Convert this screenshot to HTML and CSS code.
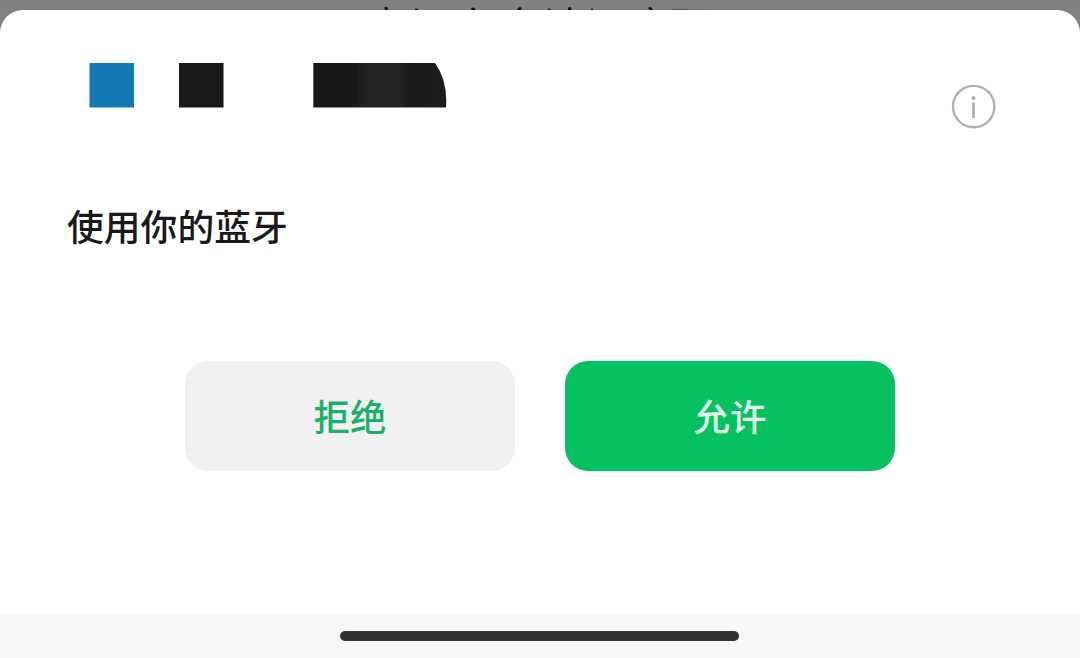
FILE: index.html
```html
<!DOCTYPE html>
<html lang="zh-CN">
<head>
<meta charset="utf-8">
<title>使用你的蓝牙</title>
<link rel="stylesheet" href="styles.css">
</head>
<body>
<div class="screen">
  <svg class="backdrop" viewBox="0 0 1080 10" aria-hidden="true">
    <path class="mark" d="M384 7.500l3-.7 1.500 3.200h-3.500zM471 8.500q3-2.500 4.500 1.500h-4zM517 10q1.500-4 4.500-2.500l-.5 2.500zM568 7.500l3-.5.7 3H568zM648 7.500l3-.5 2 3h-3.500z"/>
    <path class="mark" d="M415 8.700h3v1.300h-3zM548 8.500h2.500V10H548zM591 8.700h2V10h-2z"/>
    <path class="mark faint" d="M672 9h16v1h-16z"/>
    <path class="mark fainter" d="M688 9h23v1h-23z"/>
  </svg>
  <main class="sheet">
    <header class="header">
      <svg class="redaction" viewBox="0 0 358 45" aria-hidden="true">
        <defs>
          <linearGradient id="ink">
            <stop offset="0" stop-color="#181818"/>
            <stop offset=".32" stop-color="#191919"/>
            <stop offset=".38" stop-color="#222"/>
            <stop offset=".65" stop-color="#222"/>
            <stop offset=".73" stop-color="#191919"/>
            <stop offset="1" stop-color="#1c1c1c"/>
          </linearGradient>
        </defs>
        <path fill="#1278b6" d="M.5 0H45v44.500H.5z"/>
        <path fill="#191919" d="M90 0h44.500v44.500H90z"/>
        <path fill="url(#ink)" d="M224.300 0H346Q359 18 357 44.500H224.300z"/>
      </svg>
      <svg class="info" viewBox="0 0 46 46" role="img" aria-label="info">
        <circle cx="22.700" cy="22.600" r="20.700" fill="none" stroke="#b0b0b0" stroke-width="2.400"/>
        <circle cx="22.500" cy="14" r="2" fill="#a9a9a9"/>
        <path d="M22.500 18.500v15.300" stroke="#a9a9a9" stroke-width="2.600"/>
      </svg>
    </header>
    <h1 class="title">使用你的蓝牙</h1>
    <div class="actions">
      <button class="button deny">拒绝</button>
      <button class="button allow">允许</button>
    </div>
  </main>
  <footer class="home-area"><div class="home-indicator"></div></footer>
</div>
</body>
</html>
```
FILE: styles.css
```css
* {
  box-sizing: border-box;
}

body {
  margin: 0;
  background: #fff;
  font-family: "Noto Sans CJK SC", sans-serif;
}

.screen {
  display: flex;
  flex-direction: column;
  width: 1080px;
  height: 658px;
  overflow: hidden;
  background: linear-gradient(#818181 40px, #fff 40px);
}

.backdrop {
  display: block;
  flex: none;
  width: 1080px;
  height: 10px;
}

.mark {
  fill: #111;
}

.faint {
  fill: #555;
}

.fainter {
  fill: #707070;
}

.sheet {
  flex: none;
  height: 604px;
  padding-top: 53px;
  border-radius: 23px 23px 0 0;
  background: #fff;
}

.header {
  display: flex;
  justify-content: space-between;
  height: 67px;
  padding: 0 83px 0 89px;
}

.redaction {
  width: 358px;
  height: 45px;
}

.info {
  width: 46px;
  height: 46px;
  margin-top: 21px;
}

.title {
  height: 54px;
  margin: 68px 0 0 67px;
  color: #191919;
  font-size: 36.800px;
  font-weight: 500;
  line-height: 54px;
}

.actions {
  display: flex;
  justify-content: center;
  gap: 50px;
  margin-top: 109px;
}

.button {
  width: 330px;
  height: 110px;
  padding: 0;
  border: 0;
  border-radius: 23px;
  font-family: inherit;
  font-size: 36.500px;
  font-weight: 500;
  line-height: 110px;
}

.deny {
  background: #f1f1f1;
  color: #1bb069;
}

.allow {
  background: #07c160;
  color: #e0fdeb;
}

.home-area {
  display: flex;
  flex: none;
  height: 43.500px;
  padding: 17px 0 0 340px;
  background: #f7f7f7;
}

.home-indicator {
  width: 399px;
  height: 10px;
  border-radius: 5px;
  background: #303030;
}
```
